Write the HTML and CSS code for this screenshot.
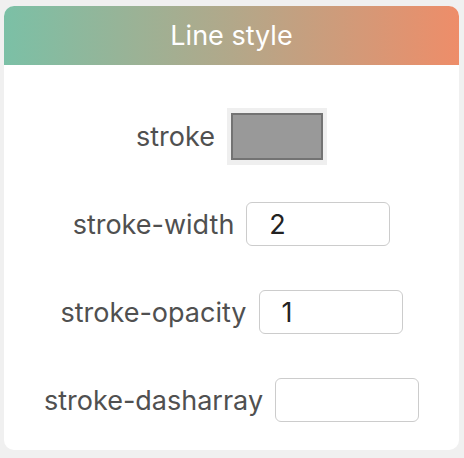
FILE: index.html
```html
<!DOCTYPE html>
<html>
<head>
<meta charset="utf-8">
<link rel="stylesheet" href="styles.css">
</head>
<body>
<div class="card">
  <div class="header">Line style</div>
  <div class="rows">
    <div class="row">
      <span class="label">stroke</span>
      <div class="swatch"><div class="swatch-fill"></div></div>
    </div>
    <div class="row">
      <span class="label">stroke-width</span>
      <input class="field" type="text" value="2">
    </div>
    <div class="row">
      <span class="label">stroke-opacity</span>
      <input class="field" type="text" value="1">
    </div>
    <div class="row">
      <span class="label">stroke-dasharray</span>
      <input class="field" type="text" value="">
    </div>
  </div>
</div>
</body>
</html>
```

FILE: styles.css
```css
html, body {
  margin: 0;
  padding: 0;
  background: #f0f0f0;
}
body {
  font-family: Inter, "Noto Sans", sans-serif;
}
.card {
  margin: 6px 5px 0 4px;
  width: 455px;
  height: 444px;
  background: #ffffff;
  border-radius: 10px;
  overflow: hidden;
  display: flex;
  flex-direction: column;
}
.header {
  height: 59px;
  display: flex;
  align-items: center;
  justify-content: center;
  color: #ffffff;
  font-size: 27px;
  background: linear-gradient(to right, #7bc0a6, #b2a88a 50%, #ee8d69);
}
.rows {
  padding-top: 27px;
  display: flex;
  flex-direction: column;
}
.row {
  height: 88px;
  display: flex;
  align-items: center;
  justify-content: center;
  gap: 12px;
}
.label {
  font-size: 27px;
  color: #505050;
}
.swatch {
  width: 100px;
  height: 57px;
  box-sizing: border-box;
  padding: 5px 4px;
  background: #efefef;
}
.swatch-fill {
  width: 100%;
  height: 100%;
  box-sizing: border-box;
  background: #999999;
  border: 2px solid #737373;
}
.field {
  width: 144px;
  height: 44px;
  box-sizing: border-box;
  border: 1.5px solid #cccccc;
  border-radius: 6px;
  padding: 0 0 0 22px;
  font-family: Inter, "Noto Sans", sans-serif;
  font-size: 27px;
  color: #222222;
  background: #ffffff;
  outline: none;
}
```
